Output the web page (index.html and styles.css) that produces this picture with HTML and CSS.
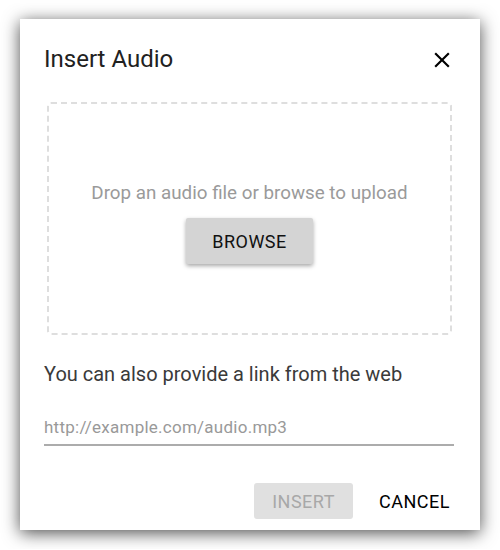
FILE: index.html
```html
<!DOCTYPE html>
<html>
<head>
<meta charset="utf-8">
<link rel="stylesheet" href="styles.css">
</head>
<body>
<div class="dialog">
  <div class="header">
    <h1 class="title">Insert Audio</h1>
    <button class="close" aria-label="Close">
      <svg width="26" height="26" viewBox="0 0 24 24"><path d="M19 6.41L17.59 5 12 10.59 6.41 5 5 6.41 10.59 12 5 17.59 6.41 19 12 13.41 17.59 19 19 17.59 13.41 12z" fill="#000"/></svg>
    </button>
  </div>
  <div class="dropzone">
    <p class="drop-text">Drop an audio file or browse to upload</p>
    <button class="browse">BROWSE</button>
  </div>
  <p class="link-label">You can also provide a link from the web</p>
  <input class="url-input" type="text" placeholder="http://example.com/audio.mp3">
  <div class="actions">
    <button class="btn insert" disabled>INSERT</button>
    <button class="btn cancel">CANCEL</button>
  </div>
</div>
</body>
</html>
```
FILE: styles.css
```css
html, body {
  margin: 0;
  padding: 0;
  background: #fff;
}
body {
  font-family: Roboto, "Liberation Sans", sans-serif;
  padding: 19px 20px;
}
.dialog {
  width: 460px;
  box-sizing: border-box;
  background: #fff;
  padding: 26px 26px 11px 24px;
  box-shadow: 0 3px 16px rgba(0, 0, 0, 0.7);
}
.header {
  display: flex;
  align-items: center;
  justify-content: space-between;
  height: 28px;
}
.title {
  margin: 0;
  font-size: 24px;
  line-height: 28px;
  font-weight: 400;
  color: #212121;
}
.close {
  border: 0;
  background: none;
  padding: 0;
  width: 26px;
  height: 26px;
  margin-right: -1px;
  margin-top: 2px;
  display: flex;
}
.dropzone {
  margin: 29px 2px 0 3px;
  height: 233px;
  box-sizing: border-box;
  border: 2px dashed #dedede;
  border-radius: 4px;
  display: flex;
  flex-direction: column;
  align-items: center;
  padding-top: 79px;
}
.drop-text {
  margin: 0;
  font-size: 18.8px;
  line-height: 21px;
  color: #9a9a9a;
}
.browse {
  margin-top: 14px;
  width: 127px;
  height: 46px;
  border: 0;
  border-radius: 2px;
  background: #d4d4d4;
  box-shadow: 0 2px 4px rgba(0, 0, 0, 0.35);
  font-family: Roboto, "Liberation Sans", sans-serif;
  font-size: 18px;
  letter-spacing: 0.5px;
  color: #111;
  padding: 0;
}
.link-label {
  margin: 27px 0 0;
  font-size: 20px;
  line-height: 24px;
  color: #3a3a3a;
}
.url-input {
  display: block;
  width: 100%;
  box-sizing: border-box;
  margin-top: 25px;
  padding: 6px 0 8px;
  border: 0;
  border-bottom: 2px solid #acacac;
  outline: none;
  font-family: Roboto, "Liberation Sans", sans-serif;
  font-size: 17px;
  letter-spacing: 0.25px;
  line-height: 19px;
  height: 35px;
  color: #333;
  background: transparent;
}
.url-input::placeholder {
  color: #999;
}
.actions {
  margin-top: 37px;
  display: flex;
  justify-content: flex-end;
  gap: 18px;
  margin-right: -4px;
}
.btn {
  height: 36px;
  border: 0;
  border-radius: 3px;
  font-family: Roboto, "Liberation Sans", sans-serif;
  font-size: 18px;
  letter-spacing: 0.5px;
  padding: 0 8px;
  background: transparent;
  color: #000;
}
.insert {
  width: 99px;
  background: #e0e0e0;
  color: #a8a8a8;
}
```
